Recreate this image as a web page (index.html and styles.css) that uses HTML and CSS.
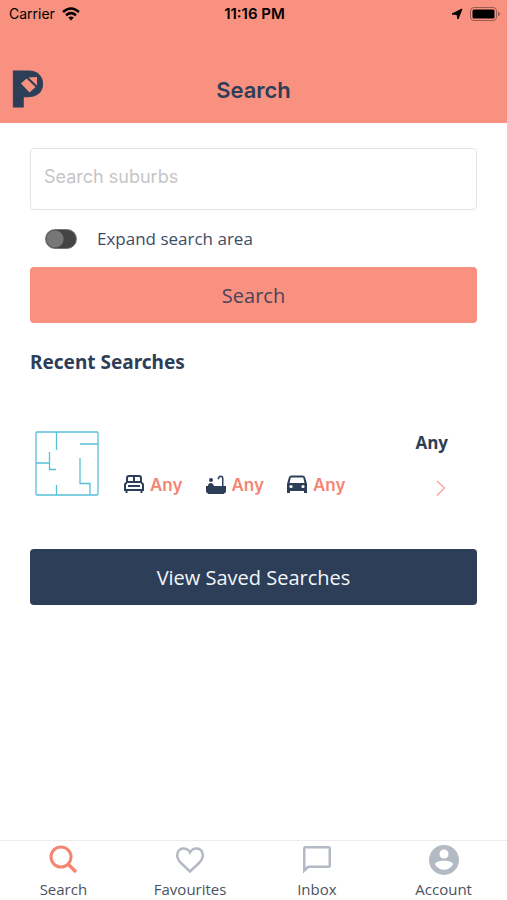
FILE: index.html
```html
<!DOCTYPE html>
<html lang="en">
<head>
<meta charset="utf-8">
<meta name="viewport" content="width=device-width, initial-scale=1">
<title>Search</title>
<link rel="stylesheet" href="styles.css">
</head>
<body>
<header class="header">
  <div class="status">
    <div class="status-left">
      <span>Carrier</span>
      <svg width="18" height="14" viewBox="0 0 18 14" fill="none" stroke="#000" stroke-width="2.5" aria-hidden="true"><path d="M1 5Q9-2 17 5M4 8.2Q9 4 14 8.2"/><path d="M6.2 10.6Q9 8.2 11.8 10.6L9 13.6Z" fill="#000" stroke="none"/></svg>
    </div>
    <span class="status-time">11:16 PM</span>
    <div class="status-right">
      <svg width="12" height="12" viewBox="0 0 12 12" aria-hidden="true"><path d="M11 1 7 11 6 6.500 1 6Z" stroke="#000"/></svg>
      <svg width="30" height="14" viewBox="0 0 30 14" aria-hidden="true"><rect x=".5" y=".5" width="26" height="13" rx="3.5" fill="none" stroke="#9b5b50"/><rect x="2.5" y="2.5" width="22" height="9" rx="1.5"/><path d="M28 5Q30 5 30 7T28 9Z" fill="#9b5b50"/></svg>
    </div>
  </div>
  <div class="title-row">
    <svg class="logo" width="42" height="64" viewBox="0 0 42 64" role="img" aria-label="P logo"><text class="logo-letter" x="1" y="49">P</text><rect x="12" y="19" width="16" height="17" fill="#2d3e58"/><path d="M11 25.500 16.500 20.500 25.500 29 19.500 34.500ZM18.500 19.500 27 19 27 27.500Z" fill="#f8917f"/></svg>
    <h1>Search</h1>
  </div>
</header>
<main class="content">
  <form class="search-form">
    <input class="suburbs" type="text" placeholder="Search suburbs" aria-label="Search suburbs">
    <label class="expand"><input class="switch" type="checkbox" role="switch"><span>Expand search area</span></label>
    <button class="button button-primary" type="button">Search</button>
  </form>
  <h2>Recent Searches</h2>
  <a class="recent" href="#recent">
    <svg width="64" height="65" viewBox="0 0 64 65" fill="none" stroke="#57c0d6" stroke-width="1.3" aria-hidden="true"><rect x="1" y="1" width="62" height="63" rx="1"/><path d="M21.5 1V19M45 13H63M1 32H14.500M14.500 21V38.500H21M45 27V52.500H55V64M21.500 54V64"/></svg>
    <span class="features">
      <span class="feature"><svg width="22" height="22" viewBox="0 0 22 22" fill="none" stroke="#2d3e58" stroke-width="2" aria-hidden="true"><path d="M4 9V4Q4 2 6 2H16Q18 2 18 4V9M11 2V8M4 8H18M4 9Q2 9 2 11V16H20V11Q20 9 18 9M5 12H17M3.500 16V19M18.500 16V19"/></svg>Any</span>
      <span class="feature"><svg width="22" height="22" viewBox="0 0 22 22" fill="#2d3e58" aria-hidden="true"><circle cx="6" cy="6" r="2"/><path d="M3 12Q3 9 6 9 8 9 9 12H17V4.500Q17 3 15.500 3T14 5.500L12.500 5Q13 1.500 15.500 1.500 18.500 1.500 18.500 4.500V12H21V17Q21 19 19 19.500V20H3V19.500Q1 19 1 17V12Z"/></svg>Any</span>
      <span class="feature"><svg width="22" height="22" viewBox="0 0 22 22" aria-hidden="true"><path d="M3 3Q3.500 1.500 5.500 1.500H16.500Q18.500 1.500 19 3L21 10V19H18V17H4V19H1V10ZM4.800 3.500 3.500 9H18.500L17.200 3.500Z" fill="#2d3e58" fill-rule="evenodd"/><circle cx="5" cy="12.500" r="1.600" fill="#fff"/><circle cx="17" cy="12.500" r="1.600" fill="#fff"/></svg>Any</span>
    </span>
    <span class="recent-end">
      <strong>Any</strong>
      <svg width="12" height="18" viewBox="0 0 12 18" fill="none" stroke="#f8a197" stroke-width="1.3" aria-hidden="true"><path d="M1 2 8.500 9 1 16.500"/></svg>
    </span>
  </a>
  <button class="button button-dark" type="button">View Saved Searches</button>
</main>
<nav class="tabs" aria-label="Main">
  <a href="#search" aria-current="page"><svg width="32" height="32" viewBox="0 0 32 32" fill="none" stroke="#f58573" stroke-width="3" aria-hidden="true"><circle cx="14" cy="14" r="10"/><path d="M21 21 29 29" stroke-width="3.500"/></svg><span>Search</span></a>
  <a href="#favourites"><svg width="32" height="32" viewBox="0 0 32 32" fill="none" stroke="#b4bac4" stroke-width="2.500" aria-hidden="true"><path d="M16 28.500 7 20C0 13 4 5.500 9.500 5.500Q14 5.500 16 9.500 18 5.500 22.500 5.500C28 5.500 32 13 25 20Z"/></svg><span>Favourites</span></a>
  <a href="#inbox"><svg width="32" height="32" viewBox="0 0 32 32" fill="#b4bac4" fill-rule="evenodd" aria-hidden="true"><path d="M4.500 3H27.500Q30 3 30 5.500V22.500Q30 25 27.500 25H8L2 30.500V5.500Q2 3 4.500 3ZM4.500 5.500V24.300L7 22.500H27.500V5.500Z"/></svg><span>Inbox</span></a>
  <a href="#account"><svg width="32" height="32" viewBox="0 0 32 32" aria-hidden="true"><circle cx="16" cy="17" r="15" fill="#b4bac4"/><circle cx="16" cy="11" r="4.500" fill="#fff"/><path d="M7 21.500C7 16.500 25 16.500 25 21.500 20.500 28.500 11.500 28.500 7 21.500Z" fill="#fff"/></svg><span>Account</span></a>
</nav>
</body>
</html>
```
FILE: styles.css
```css
* { box-sizing: border-box; }
body {
  margin: 0;
  min-height: 100vh;
  display: flex;
  flex-direction: column;
  background: #fff;
  color: #2d3e58;
  font-family: "Open Sans", sans-serif;
}
svg { display: block; flex: none; }
h1, h2 { margin: 0; }
.header { background: #f8917f; padding-bottom: 1px; }
.status {
  display: grid;
  grid-template-columns: 1fr auto 1fr;
  align-items: center;
  height: 28px;
  padding: 0 7px 0 9px;
  color: #000;
  font: 14px/20px Inter, sans-serif;
}
.status-left, .status-right { display: flex; align-items: center; gap: 7px; }
.status-right { justify-content: flex-end; }
.status-time { font-size: 15px; font-weight: 600; }
.title-row {
  display: grid;
  grid-template-columns: 1fr auto 1fr;
  align-items: center;
  padding: 30px 10px 0;
}
.logo-letter {
  font: 900 50px Inter, sans-serif;
  fill: #2d3e58;
  stroke: #2d3e58;
  stroke-width: 1px;
}
h1 { font: 600 22px/28px Inter, sans-serif; }
.content { flex: 1; padding: 25px 30px; }
.search-form { display: flex; flex-direction: column; }
.suburbs {
  width: 100%;
  height: 62px;
  padding: 0 13px 6px;
  border: 1px solid #e4e4e6;
  border-radius: 4px;
  background: #fff;
  color: #2d3e58;
  font: 18px/24px Inter, sans-serif;
}
.suburbs::placeholder { color: #c5c5c7; opacity: 1; }
.expand {
  display: flex;
  align-items: center;
  gap: 20px;
  height: 57px;
  padding-left: 15px;
  color: #3d4c66;
  font-size: 17px;
}
.switch {
  appearance: none;
  width: 32px;
  height: 20px;
  margin: 0;
  border: 1px solid #777;
  border-radius: 10px;
  background: radial-gradient(circle at 9px 9px, #777 8px, #444 9px);
}
.switch:checked { background: radial-gradient(circle at 21px 9px, #fff 8px, #f8917f 9px); }
.button {
  display: block;
  width: 100%;
  height: 56px;
  padding: 2px 0 0;
  border: 0;
  border-radius: 4px;
  font: 20px/28px "Open Sans", sans-serif;
}
.button-primary { background: #f8917f; color: #4c435a; }
.button-dark { background: #2d3e58; color: #f2f6fb; }
h2 { margin-top: 25px; font: 700 19px/28px "Noto Sans", sans-serif; }
.recent {
  display: flex;
  align-items: center;
  margin: 43px 0 41px;
  padding: 0 29px 0 5px;
  height: 89px;
  color: inherit;
  text-decoration: none;
}
.features { display: flex; gap: 22px; margin-left: 24px; padding-top: 42px; }
.feature {
  display: flex;
  align-items: center;
  gap: 5px;
  color: #f58573;
  font: 600 17px/24px Inter, sans-serif;
}
.recent-end {
  display: flex;
  flex-direction: column;
  align-items: flex-end;
  gap: 24px;
  margin-left: auto;
  font-size: 17px;
  line-height: 24px;
}
.tabs {
  display: grid;
  grid-template-columns: repeat(4, 1fr);
  height: 60px;
  padding-top: 2px;
  border-top: 1px solid #ececee;
}
.tabs a {
  display: flex;
  flex-direction: column;
  align-items: center;
  gap: 4px;
  color: #4a5262;
  font-size: 15px;
  line-height: 20px;
  text-decoration: none;
}
```
